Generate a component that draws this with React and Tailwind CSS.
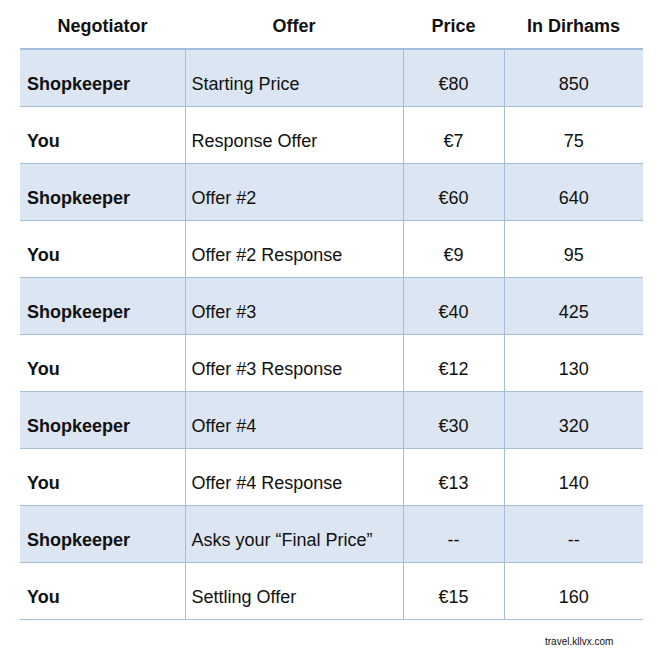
const rows = [
  ['Shopkeeper', 'Starting Price', '€80', '850'],
  ['You', 'Response Offer', '€7', '75'],
  ['Shopkeeper', 'Offer #2', '€60', '640'],
  ['You', 'Offer #2 Response', '€9', '95'],
  ['Shopkeeper', 'Offer #3', '€40', '425'],
  ['You', 'Offer #3 Response', '€12', '130'],
  ['Shopkeeper', 'Offer #4', '€30', '320'],
  ['You', 'Offer #4 Response', '€13', '140'],
  ['Shopkeeper', 'Asks your “Final Price”', '--', '--'],
  ['You', 'Settling Offer', '€15', '160'],
];

export default function App() {
  return (
    <div className="w-[658px] h-[651px] bg-white font-['Liberation_Sans',Arial,sans-serif] text-[18px] text-[#111] relative">
      <table className="ml-[20px] w-[623px] border-collapse table-fixed">
        <colgroup>
          <col className="w-[165px]" />
          <col className="w-[218px]" />
          <col className="w-[101px]" />
          <col className="w-[139px]" />
        </colgroup>
        <thead>
          <tr className="h-[49px] border-b-2 border-[#a5bedc]">
            <th className="font-bold text-center pt-[5px]">Negotiator</th>
            <th className="font-bold text-center pt-[5px]">Offer</th>
            <th className="font-bold text-center pt-[5px]">Price</th>
            <th className="font-bold text-center pt-[5px]">In Dirhams</th>
          </tr>
        </thead>
        <tbody>
          {rows.map((r, i) => (
            <tr key={i} className={`h-[57px] border-b border-[#a5bedc] ${i % 2 === 0 ? 'bg-[#dce6f2]' : 'bg-white'}`}>
              <td className="font-bold pl-[7px] pt-[13px]">{r[0]}</td>
              <td className="border-l border-[#a5bedc] pl-[6px] pt-[13px]">{r[1]}</td>
              <td className="border-l border-[#a5bedc] text-center pt-[13px]">{r[2]}</td>
              <td className="border-l border-[#a5bedc] text-center pt-[13px]">{r[3]}</td>
            </tr>
          ))}
        </tbody>
      </table>
      <div className="absolute left-[545px] top-[637px] text-[10px] leading-none">
        travel.kllvx.com
      </div>
    </div>
  );
}
